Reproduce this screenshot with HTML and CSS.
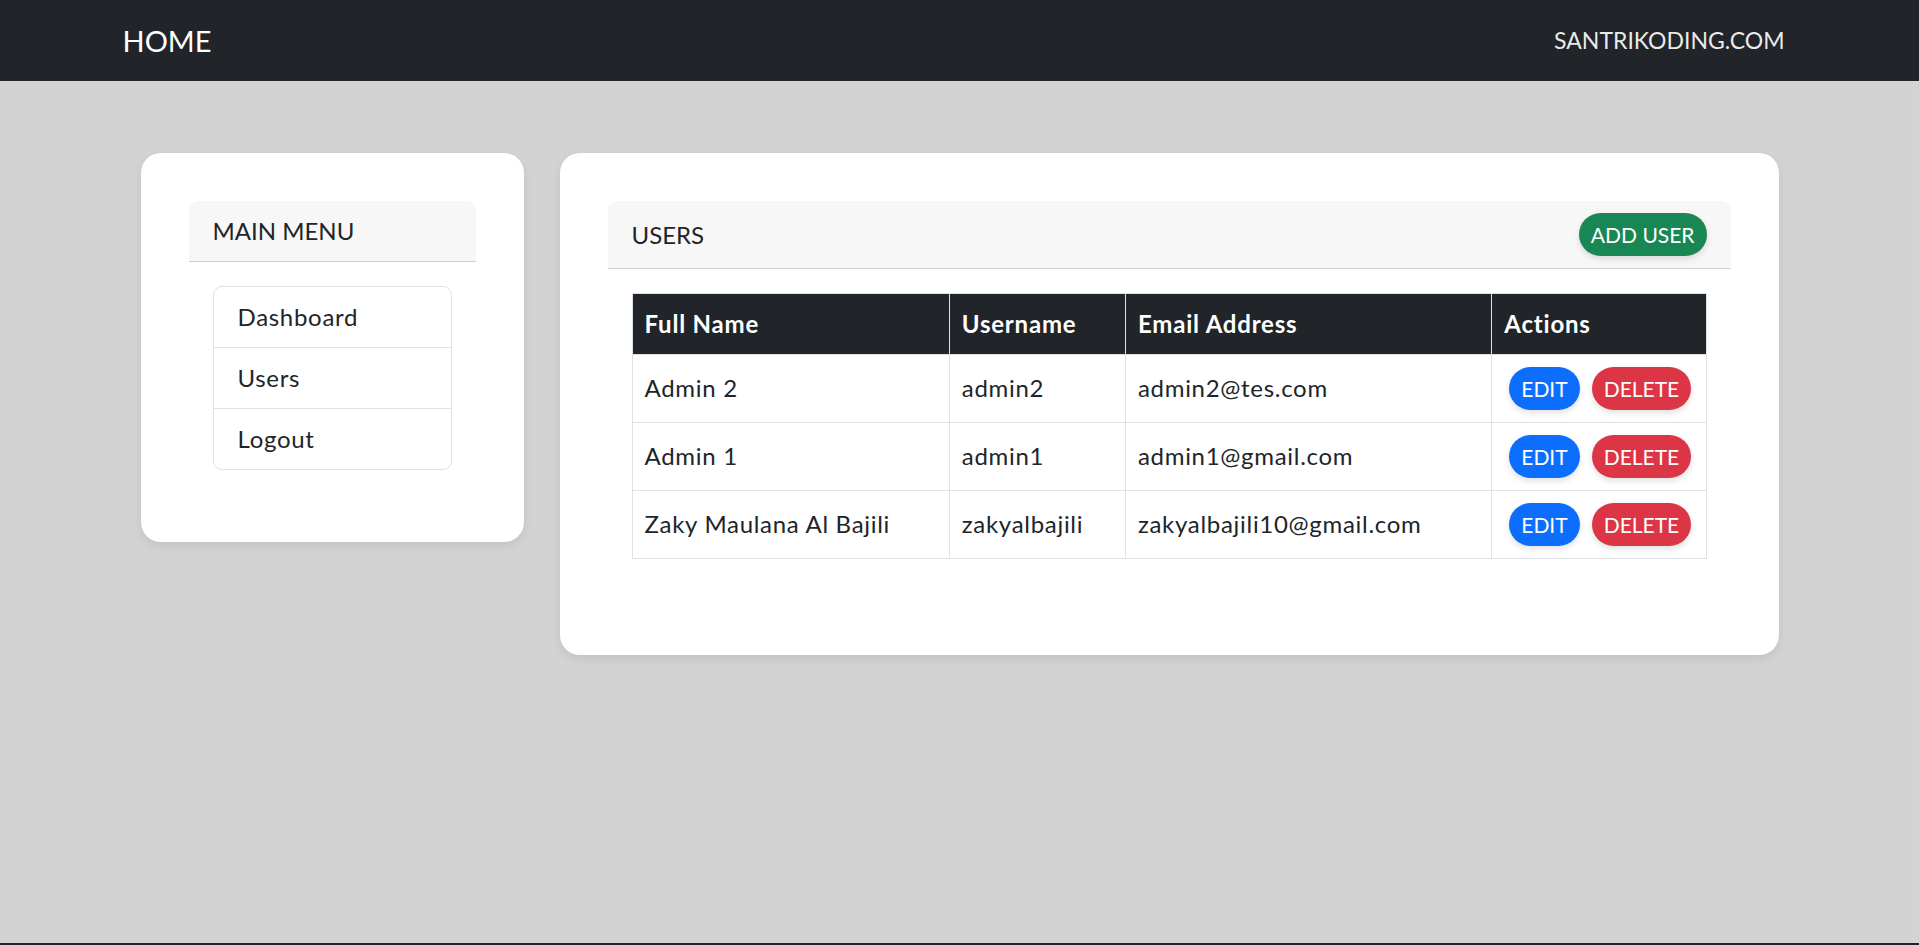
FILE: index.html
```html
<!DOCTYPE html>
<html lang="en">
<head>
    <meta charset="UTF-8">
    <meta name="viewport" content="width=device-width, initial-scale=1.0">
    <title>Users</title>
    <link rel="stylesheet" href="styles.css">
</head>
<body>
    <nav class="navbar">
        <div class="container nav-inner">
            <a class="brand" href="#">HOME</a>
            <a class="nav-link" href="#">SANTRIKODING.COM</a>
        </div>
    </nav>

    <main class="main">
        <div class="container content">
            <div class="panel">
                <div class="card">
                    <div class="card-header">MAIN MENU</div>
                    <div class="card-body">
                        <ul class="list-group">
                            <li><a href="#">Dashboard</a></li>
                            <li><a href="#">Users</a></li>
                            <li><a href="#">Logout</a></li>
                        </ul>
                    </div>
                </div>
            </div>

            <div class="panel">
                <div class="card">
                    <div class="card-header header-flex">
                        <span>USERS</span>
                        <a href="#" class="btn btn-success">ADD USER</a>
                    </div>
                    <div class="card-body">
                        <table class="table">
                            <colgroup>
                                <col style="width: 317px">
                                <col style="width: 176px">
                                <col style="width: 366px">
                                <col style="width: 214px">
                            </colgroup>
                            <thead>
                                <tr>
                                    <th>Full Name</th>
                                    <th>Username</th>
                                    <th>Email Address</th>
                                    <th>Actions</th>
                                </tr>
                            </thead>
                            <tbody id="userRows"></tbody>
                        </table>
                    </div>
                </div>
            </div>
        </div>
    </main>

    <footer class="footer"></footer>

    <script>
        const users = [
            { name: 'Admin 2', username: 'admin2', email: 'admin2@tes.com' },
            { name: 'Admin 1', username: 'admin1', email: 'admin1@gmail.com' },
            { name: 'Zaky Maulana Al Bajili', username: 'zakyalbajili', email: 'zakyalbajili10@gmail.com' }
        ];

        const rows = document.getElementById('userRows');
        users.forEach(user => {
            const tr = document.createElement('tr');
            tr.innerHTML = `
                <td>${user.name}</td>
                <td>${user.username}</td>
                <td>${user.email}</td>
                <td class="actions"><a href="#" class="btn btn-primary">EDIT</a><a href="#" class="btn btn-danger">DELETE</a></td>
            `;
            rows.appendChild(tr);
        });
    </script>
</body>
</html>
```

FILE: styles.css
```css
* {
    box-sizing: border-box;
}

body {
    margin: 0;
    font-family: 'Lato', 'Noto Sans', sans-serif;
    font-size: 24px;
    line-height: 1.5;
    color: #212529;
    background-color: #d3d3d3;
}

a {
    text-decoration: none;
    color: inherit;
}

.container {
    width: 1710px;
    margin: 0 auto;
}

/* navbar */
.navbar {
    background-color: #212529;
    height: 81px;
}

.nav-inner {
    height: 100%;
    padding: 0 18px;
    display: flex;
    align-items: center;
    justify-content: space-between;
}

.brand {
    color: #fff;
    font-size: 29px;
    line-height: 45px;
}

.nav-link {
    color: rgba(255, 255, 255, 0.92);
    padding: 0 12px;
    font-size: 23px;
}

/* content */
.main {
    min-height: 862px;
}

.content {
    padding: 72px 36px 0;
    display: grid;
    grid-template-columns: 383px 1fr;
    gap: 36px;
    align-items: start;
}

.panel {
    background-color: #fff;
    border-radius: 20px;
    padding: 48px;
    box-shadow: 0 4px 10px rgba(0, 0, 0, 0.08);
}

.card {
    background-color: #fff;
    border-radius: 9px;
}

.card-header {
    background-color: #f7f7f7;
    border-bottom: 1px solid #cfcfcf;
    border-radius: 9px 9px 0 0;
    padding: 12px 24px;
    line-height: 36px;
}

.header-flex {
    display: flex;
    align-items: center;
    justify-content: space-between;
}

.card-body {
    padding: 24px;
}

.list-group {
    list-style: none;
    margin: 0;
    padding: 0;
    border: 1px solid #dee2e6;
    border-radius: 9px;
}

.list-group li a {
    display: block;
    padding: 12px 24px;
    line-height: 36px;
    letter-spacing: 0.7px;
}

.list-group li + li {
    border-top: 1px solid #dee2e6;
}

/* table */
.table {
    width: 100%;
    border-collapse: collapse;
    table-layout: fixed;
    margin-bottom: 24px;
}

.table th,
.table td {
    border: 1px solid #dee2e6;
    padding: 12px;
    text-align: left;
    vertical-align: top;
    line-height: 36px;
    letter-spacing: 0.7px;
}

.table thead th {
    background-color: #212529;
    color: #fff;
    font-weight: 700;
    letter-spacing: 0.8px;
}

.table td {
    line-height: 42px;
}

.table td.actions {
    padding-left: 17px;
    white-space: nowrap;
    letter-spacing: normal;
}

/* buttons */
.btn {
    display: inline-block;
    font-size: 21px;
    line-height: 31px;
    padding: 6px 12px;
    border-radius: 50px;
    color: #fff;
    box-shadow: 0 3px 6px rgba(0, 0, 0, 0.12);
    vertical-align: top;
}

.btn-success {
    background-color: #198754;
    padding: 6px 12px;
}

.btn-primary {
    background-color: #0d6efd;
}

.btn-danger {
    background-color: #dc3545;
    margin-left: 12px;
}

.footer {
    background-color: #212529;
    height: 60px;
}
```
